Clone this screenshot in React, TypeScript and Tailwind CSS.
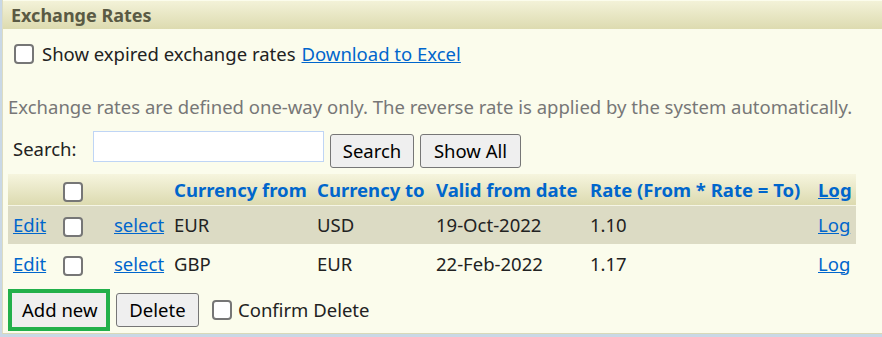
import React from "react";

const Box = ({ className = "" }: { className?: string }) => (
  <input
    type="checkbox"
    className={`appearance-none w-[20px] h-[20px] border-2 border-[#767676] rounded-[4px] bg-white align-middle shrink-0 ${className}`}
  />
);

const Btn = ({ children, className = "" }: { children: React.ReactNode; className?: string }) => (
  <button
    className={`h-[34px] px-[10px] bg-[#efefef] border border-[#767676] rounded-[3px] text-black leading-none whitespace-nowrap ${className}`}
  >
    {children}
  </button>
);

const ROWS = [
  { from: "EUR", to: "USD", date: "19-Oct-2022", rate: "1.10", alt: true },
  { from: "GBP", to: "EUR", date: "22-Feb-2022", rate: "1.17", alt: false },
];

export default function App() {
  return (
    <div
      className="w-[882px] h-[337px] bg-[#c9d8e6] overflow-hidden text-[18.5px] text-[#222]"
      style={{ fontFamily: '"Noto Sans", "Open Sans", sans-serif' }}
    >
      <div className="h-[334px] ml-[2px] pt-[1px] bg-[#fbfcec] border-l border-[#dcdcc2] border-b border-b-[#d9d9b8]">
        <div className="h-[28px] bg-gradient-to-b from-[#f3f2d8] to-[#dddbb0] pl-[8px] flex items-center text-[18px] font-bold text-[#5a5a44]">
          Exchange Rates
        </div>

        <div className="flex items-center h-[34px] mt-[8px] pl-[11px]">
          <Box />
          <span className="ml-[8px]">Show expired exchange rates</span>
          <a href="#" className="ml-[6px] text-[#0066cc] underline">Download to Excel</a>
        </div>

        <div className="mt-[22px] pl-[5px] text-[#777] whitespace-nowrap">
          Exchange rates are defined one-way only. The reverse rate is applied by the system automatically.
        </div>

        <div className="flex items-start mt-[10px] pl-[10px] h-[37px]">
          <span className="w-[80px] self-center">Search:</span>
          <input className="w-[231px] h-[31px] bg-white border border-[#bfd5f5]" />
          <Btn className="ml-[6px] mt-[3px] w-[84px]">Search</Btn>
          <Btn className="ml-[6px] mt-[3px] w-[101px]">Show All</Btn>
        </div>

        <table className="ml-[5px] mt-[6px] w-[848px] border-collapse table-fixed">
          <colgroup>
            <col className="w-[50px]" />
            <col className="w-[51px]" />
            <col className="w-[60px]" />
            <col className="w-[143px]" />
            <col className="w-[119px]" />
            <col className="w-[154px]" />
            <col className="w-[228px]" />
            <col className="w-[43px]" />
          </colgroup>
          <thead>
            <tr className="bg-gradient-to-b from-[#f6f5de] to-[#dcdab0] border-b border-[#f5f5e6] text-[#0066cc] font-bold text-left">
              <th className="h-[32px] p-0" />
              <th className="pl-[5px]"><Box /></th>
              <th />
              <th className="pl-[5px] whitespace-nowrap">Currency from</th>
              <th className="pl-[5px] whitespace-nowrap">Currency to</th>
              <th className="pl-[5px] whitespace-nowrap">Valid from date</th>
              <th className="pl-[5px] whitespace-nowrap">Rate (From * Rate = To)</th>
              <th className="pl-[5px]"><a href="#" className="underline">Log</a></th>
            </tr>
          </thead>
          <tbody>
            {ROWS.map((r) => (
              <tr key={r.from} className={r.alt ? "bg-[#dcdbc4]" : ""}>
                <td className={`pl-[5px] p-0 ${r.alt ? "h-[38px]" : "h-[40px]"}`}>
                  <a href="#" className="text-[#0066cc] underline">Edit</a>
                </td>
                <td className="pl-[5px]"><Box /></td>
                <td className="pl-[5px]"><a href="#" className="text-[#0066cc] underline">select</a></td>
                <td className="pl-[5px]">{r.from}</td>
                <td className="pl-[5px]">{r.to}</td>
                <td className="pl-[5px]">{r.date}</td>
                <td className="pl-[5px]">{r.rate}</td>
                <td className="pl-[5px]"><a href="#" className="text-[#0066cc] underline">Log</a></td>
              </tr>
            ))}
          </tbody>
        </table>

        <div className="flex items-center mt-[5px] pl-[5px]">
          <div className="border-4 border-[#22b04b]">
            <Btn className="w-[94px] h-[30px] rounded-none border-0">Add new</Btn>
          </div>
          <Btn className="ml-[6px] w-[83px]">Delete</Btn>
          <Box className="ml-[13px]" />
          <span className="ml-[6px]">Confirm Delete</span>
        </div>
      </div>
    </div>
  );
}
